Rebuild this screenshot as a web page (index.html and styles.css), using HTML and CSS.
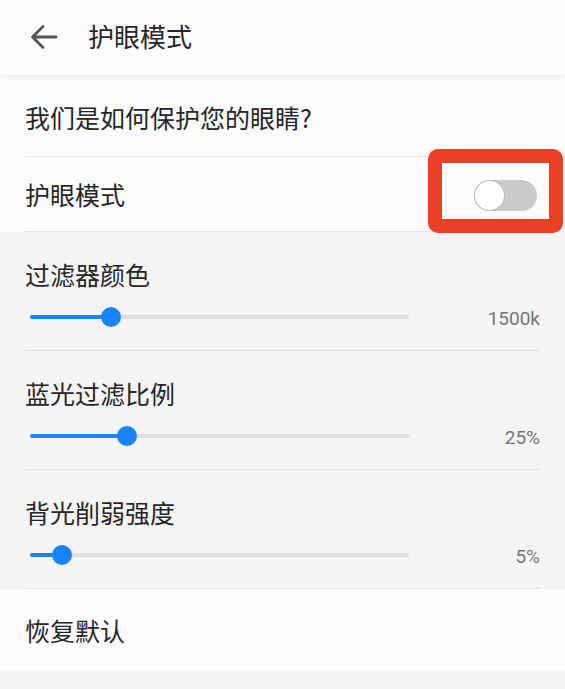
FILE: index.html
```html
<!DOCTYPE html>
<html lang="zh-CN">
<head>
  <meta charset="UTF-8" />
  <meta name="viewport" content="width=device-width, initial-scale=1.0"/>
  <title>护眼模式</title>
  <link rel="stylesheet" href="styles.css">
</head>
<body>
  <div class="topbar">
    <svg class="back" width="28" height="26" viewBox="0 0 28 26">
      <path d="M26 13H3M13 2.5L2.5 13L13 23.5" fill="none" stroke="#555" stroke-width="2.8" stroke-linecap="round" stroke-linejoin="round"/>
    </svg>
    <h1>护眼模式</h1>
  </div>

  <div class="card">
    <div class="row row-first">
      <span>我们是如何保护您的眼睛?</span>
    </div>
    <div class="row row-switch">
      <span>护眼模式</span>
      <div class="switch"><div class="knob"></div></div>
    </div>
  </div>

  <div class="sliders">
    <div class="group">
      <div class="group-title">过滤器颜色</div>
      <div class="slider-row">
        <div class="track"><div class="fill" style="width: 21.4%;"></div></div>
        <span class="value">1500k</span>
      </div>
    </div>
    <div class="group">
      <div class="group-title">蓝光过滤比例</div>
      <div class="slider-row">
        <div class="track"><div class="fill" style="width: 25.6%;"></div></div>
        <span class="value">25%</span>
      </div>
    </div>
    <div class="group">
      <div class="group-title">背光削弱强度</div>
      <div class="slider-row">
        <div class="track"><div class="fill" style="width: 8.4%;"></div></div>
        <span class="value">5%</span>
      </div>
    </div>
  </div>

  <div class="card">
    <div class="row row-reset">
      <span>恢复默认</span>
    </div>
  </div>

  <div class="highlight"></div>
</body>
</html>
```

FILE: styles.css
```css
body {
  margin: 0;
  background-color: #f5f5f5;
  font-family: "Noto Sans CJK SC", "Noto Sans", sans-serif;
  color: #262626;
  position: relative;
  height: 689px;
  overflow: hidden;
}
.topbar {
  height: 75px;
  background-color: #fcfcfc;
  display: flex;
  align-items: center;
  box-shadow: 0 2px 6px rgba(0, 0, 0, 0.07);
  position: relative;
  z-index: 1;
}
.back {
  margin-left: 30px;
  margin-top: -2px;
}
.topbar h1 {
  margin: 0 0 0 30px;
  font-size: 26px;
  font-weight: normal;
  line-height: 36px;
  margin-top: -3px;
}
.card {
  background-color: #fcfcfc;
}
.row {
  display: flex;
  align-items: center;
  justify-content: space-between;
  margin-left: 25px;
  font-size: 25px;
  line-height: 34px;
}
.row-first {
  height: 82px;
  padding-top: 3px;
  box-sizing: border-box;
  border-bottom: 1px solid #e6e6e6;
}
.row-switch {
  height: 75px;
  padding-bottom: 1px;
  box-sizing: border-box;
  border-bottom: 1px solid #e6e6e6;
}
.row-reset {
  height: 81px;
}
.switch {
  width: 63px;
  height: 31px;
  border-radius: 16px;
  background-color: #c9cacc;
  margin-right: 28px;
  margin-top: 3px;
  position: relative;
}
.knob {
  position: absolute;
  left: 1px;
  top: 1px;
  width: 29px;
  height: 29px;
  border-radius: 50%;
  background-color: #ffffff;
  box-shadow: 0 0 0 1px #bdbdbd;
}
.sliders {
  padding: 0 25px;
}
.group {
  height: 119px;
  box-sizing: border-box;
  border-bottom: 1px solid #e4e4e4;
  padding-top: 25px;
}
.group-title {
  font-size: 25px;
  line-height: 34px;
}
.slider-row {
  display: flex;
  align-items: center;
  justify-content: space-between;
  height: 22px;
  margin-top: 15px;
  padding-left: 5px;
}
.track {
  width: 379px;
  height: 4px;
  background-color: #dedede;
  border-radius: 2px;
  position: relative;
}
.fill {
  height: 100%;
  background-color: #1a82fb;
  border-radius: 2px;
  position: relative;
}
.fill::after {
  content: "";
  position: absolute;
  right: -10px;
  top: -8px;
  width: 20px;
  height: 20px;
  border-radius: 50%;
  background-color: #1a82fb;
}
.value {
  font-family: Roboto, "Liberation Sans", sans-serif;
  font-size: 19px;
  color: #757575;
  margin-top: 2px;
}
.highlight {
  position: absolute;
  left: 428px;
  top: 149px;
  width: 135px;
  height: 84px;
  box-sizing: border-box;
  border: 14px solid #ea4028;
  border-radius: 10px;
  z-index: 2;
}
```
